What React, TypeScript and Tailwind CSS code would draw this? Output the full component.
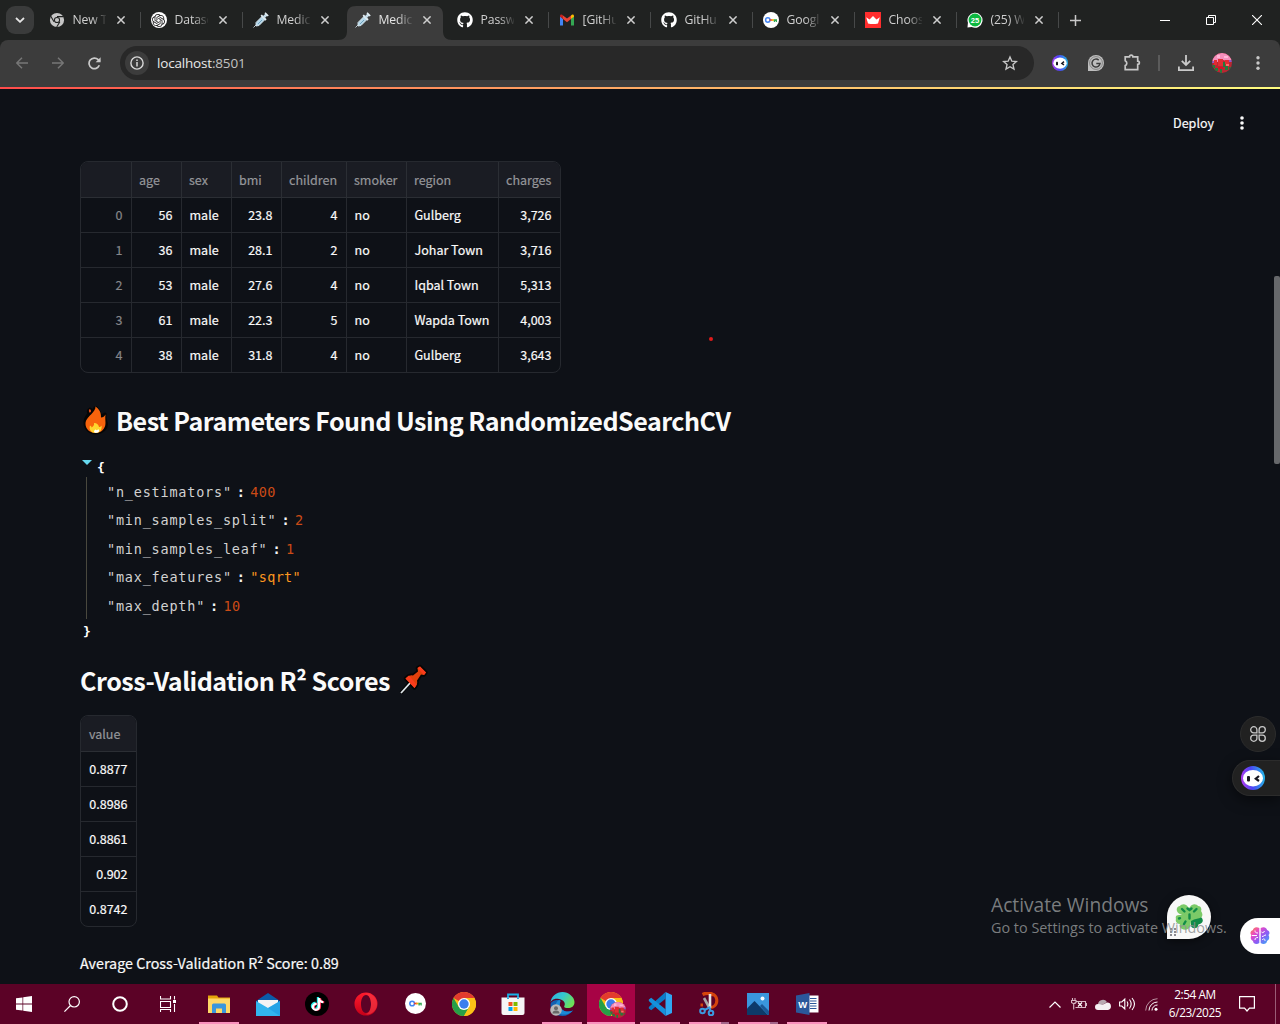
import React from 'react';
import { FaGithub, FaTiktok } from 'react-icons/fa';
import { SiOpenai } from 'react-icons/si';

const sans = "font-['Noto_Sans_CJK_SC',sans-serif]";
const ui = "font-['Open_Sans','Noto_Sans',sans-serif]";

function Syringe() {
  return (
    <svg width="16" height="16" viewBox="0 0 16 16" fill="none">
      <path d="M.5 15.500 4 12" stroke="#b9c4cc" strokeWidth="1" />
      <path d="m3 10.500 6-6 3 3-6 6-3 .5z" fill="#b5d8ea" stroke="#d8e6ee" strokeWidth=".9" />
      <path d="m5 12 4-4" stroke="#6f9fbb" strokeWidth="1" />
      <path d="m8.200 3.200 4.800 4.800" stroke="#e4eef4" strokeWidth="1.800" />
      <path d="m10.500 5.500 3-3" stroke="#c5dbe8" strokeWidth="2.600" />
      <path d="m12 .8 3.200 3.200" stroke="#e4eef4" strokeWidth="1.600" />
    </svg>
  );
}

function GrayChrome() {
  return (
    <svg width="16" height="16" viewBox="0 0 16 16" fill="none">
      <circle cx="8" cy="8" r="5.100" stroke="#c6c6c6" strokeWidth="4" />
      <circle cx="8" cy="8" r="2.100" fill="#c6c6c6" />
      <path d="M8 4.600h6.500M5 9.700 1.800 4.300M10.900 9.700 7.700 15" stroke="#202221" strokeWidth="1.100" />
    </svg>
  );
}

function Chrome({ size = 24 }: { size?: number }) {
  return (
    <svg width={size} height={size} viewBox="0 0 24 24">
      <circle cx="12" cy="12" r="12" fill="#fbc116" />
      <path d="M12 12 1.600 6A12 12 0 0 1 22.400 6z" fill="#e33b2e" />
      <path d="M1.600 6A12 12 0 0 0 12 24l5.200-9L12 12 6.800 15z" fill="#269f48" />
      <path d="M12 6h10.400A12 12 0 0 1 12 24l5.200-9z" fill="#fbc116" />
      <circle cx="12" cy="12" r="6" fill="#fff" />
      <circle cx="12" cy="12" r="4.700" fill="#3b7ded" />
    </svg>
  );
}

function KeyBadge({ size = 16, glyph = 1 }: { size?: number; glyph?: number }) {
  return (
    <svg width={size} height={size} viewBox="0 0 16 16" fill="none">
      <circle cx="8" cy="8" r="8" fill="#fff" />
      <g transform={`translate(${8 - 8 * glyph} ${8 - 8 * glyph}) scale(${glyph})`}>
        <circle cx="4.800" cy="8" r="2.200" stroke="#4285f4" strokeWidth="1.500" />
        <path d="M6.600 8h3" stroke="#ea4335" strokeWidth="1.600" />
        <path d="M8.800 8h2.200" stroke="#fbbc04" strokeWidth="1.600" />
        <path d="M10.800 7.200H14V10h-1.200V9h-.7v1h-1.300z" fill="#34a853" />
      </g>
    </svg>
  );
}

function Gmail() {
  return (
    <svg width="16" height="16" viewBox="0 0 16 16">
      <path d="M1 4v9.500h3V7z" fill="#4285f4" />
      <path d="M12 7v6.500h3V4z" fill="#34a853" />
      <path d="M12 3.400V7l3-2.200V4c0-1.800-1.800-2.200-3-.6" fill="#fbbc04" />
      <path d="M4 3.400 8 6.500l4-3.100V7l-4 3.200L4 7z" fill="#ea4335" />
      <path d="M1 4c0-1.800 1.800-2.200 3-.6V7L1 4.800z" fill="#c5221f" />
    </svg>
  );
}

function Crown() {
  return (
    <svg width="16" height="16" viewBox="0 0 16 16">
      <path d="M0 0h16v16H0z" fill="#ff2d2d" />
      <path d="m1.200 5.300 3.300 2.300L8 4l3.500 3.600 3.300-2.300L13 11.500q-5 1-10 0z" fill="#fff" />
    </svg>
  );
}

function WhatsApp() {
  return (
    <svg width="17" height="16" viewBox="0 0 17 16">
      <path d="M.5 16 1 11A8 8 0 1 1 5 15.400z" fill="#fff" />
      <circle cx="8.500" cy="8" r="6.800" fill="#0cb83f" />
      <text x="8.400" y="10.900" textAnchor="middle" fontSize="8" fontWeight="700" fill="#fff" fontFamily="Liberation Sans, sans-serif">25</text>
    </svg>
  );
}

function Bot({ size }: { size: number }) {
  return (
    <svg width={size} height={size} viewBox="0 0 24 24">
      <defs>
        <linearGradient id="botRing" x1="0" y1="0.7" x2="1" y2="0.6">
          <stop offset="0" stopColor="#b43cf0" />
          <stop offset=".45" stopColor="#4b45f5" />
          <stop offset="1" stopColor="#25b4e8" />
        </linearGradient>
      </defs>
      <circle cx="12" cy="12" r="12" fill="url(#botRing)" />
      <ellipse cx="12" cy="12.200" rx="10" ry="8.300" fill="#fff" />
      <rect x="6" y="10" width="3" height="5.500" rx="1" fill="#171720" />
      <path d="m18 10-3.200 2.600L18 15" fill="none" stroke="#171720" strokeWidth="2.200" />
    </svg>
  );
}

function Flowers({ size = 20 }: { size?: number }) {
  return (
    <svg width={size} height={size} viewBox="0 0 20 20">
      <defs><clipPath id="flowerClip"><circle cx="10" cy="10" r="10" /></clipPath></defs>
      <g clipPath="url(#flowerClip)">
        <path d="M0 0h20v20H0z" fill="#b92732" />
        <path d="M0 0h20v7l-5 1-4-1-5 2-6-1z" fill="#f48fbc" />
        <path d="M5 2h3v3H5zM12 3h4v2h-4z" fill="#ffb6d6" />
        <path d="M0 8h3v2H0zM17 7h3v2h-3z" fill="#9057c9" />
        <path d="M2 7h3v5H2zM6 6h5v7H6zM13 7h4v4h-4z" fill="#e22c31" />
        <path d="M0 12h3v3H0zM3 15h3v3H3zM11 9h2v5h-2zM13 13h3v4h-3zM17 14h3v3h-3zM8 16h2v4H8z" fill="#247a3b" />
        <path d="M14 11h3v2h-3z" fill="#ff6d67" />
        <path d="M6 14h5v2H6z" fill="#d60f26" />
      </g>
    </svg>
  );
}

function Cross() {
  return (
    <svg width="8" height="8" viewBox="0 0 8 8"><path d="m.4.400 7.200 7.200m0-7.200L.4 7.600" stroke="#cfcfcf" strokeWidth="1.500" /></svg>
  );
}

const tabs: { icon: React.ReactNode; title: string }[] = [
  { icon: <GrayChrome />, title: 'New T' },
  { icon: <span className="flex size-4 items-center justify-center rounded-full bg-white"><SiOpenai size={13} color="#222" /></span>, title: 'Datase' },
  { icon: <Syringe />, title: 'Medic' },
  { icon: <Syringe />, title: 'Medic' },
  { icon: <FaGithub size={16} color="#fff" />, title: 'Passw' },
  { icon: <Gmail />, title: '[GitHu' },
  { icon: <FaGithub size={16} color="#fff" />, title: 'GitHu' },
  { icon: <KeyBadge />, title: 'Googl' },
  { icon: <Crown />, title: 'Choos' },
  { icon: <WhatsApp />, title: '(25) W' },
];

function Tab({ icon, title, active, divider }: { icon: React.ReactNode; title: string; active: boolean; divider: boolean }) {
  return (
    <div className="relative flex h-10 w-[102px] shrink-0 items-center">
      {active && (
        <svg className="absolute -left-[7px] top-[6px]" width="116" height="34" viewBox="0 0 116 34">
          <path d="M0 34c6 0 9-3 9-9V9c0-6 3-9 9-9h78c6 0 9 3 9 9v16c0 6 3 9 9 9z" fill="#3c3c3c" />
        </svg>
      )}
      <span className="relative ml-[9.500px] flex w-4 shrink-0 justify-center">{icon}</span>
      <span className={`relative ml-2 w-[33px] shrink-0 whitespace-nowrap text-[12.200px] leading-4 tracking-[-0.1px] [mask-image:linear-gradient(to_right,black_55%,transparent_105%)] ${active ? 'text-[#e3e3e3]' : 'text-[#d0d0d0]'}`}>{title}</span>
      <span className="relative ml-[11.500px]"><Cross /></span>
      {divider && <span className="ml-auto h-4 w-px bg-[#474949]" />}
    </div>
  );
}

function TabStrip() {
  return (
    <div className={`flex h-10 items-center bg-[#202221] ${ui}`}>
      <div className="ml-[6px] mr-[5px] flex size-7 shrink-0 items-center justify-center rounded-[9px] bg-[#3a3b3b]">
        <svg width="10" height="6" viewBox="0 0 10 6" fill="none"><path d="m1 1 4 3.800L9 1" stroke="#e6e6e6" strokeWidth="1.800" /></svg>
      </div>
      {tabs.map((t, i) => <Tab key={i} icon={t.icon} title={t.title} active={i === 3} divider={i !== 2 && i !== 3} />)}
      <svg className="ml-[10.500px] shrink-0" width="11" height="11" viewBox="0 0 11 11"><path d="M5.500 0v11M0 5.500h11" stroke="#c9c9c9" strokeWidth="1.500" /></svg>
      <div className="ml-auto flex">
        <div className="flex w-[46px] justify-center"><svg width="10" height="10" viewBox="0 0 10 10"><path d="M0 5.500h10" stroke="#fff" /></svg></div>
        <div className="flex w-[46px] justify-center"><svg width="10" height="10" viewBox="0 0 10 10" fill="none"><path d="M.5 2.500h7v7h-7zM2.500 2V.500h7v7H8" stroke="#fff" /></svg></div>
        <div className="flex w-[46px] justify-center"><svg width="10" height="10" viewBox="0 0 10 10"><path d="m0 0 10 10M10 0 0 10" stroke="#fff" strokeWidth="1.100" /></svg></div>
      </div>
    </div>
  );
}

function Slot({ children }: { children: React.ReactNode }) {
  return <div className="flex w-9 shrink-0 items-center justify-center">{children}</div>;
}

function Toolbar() {
  return (
    <div className="bg-[#202221]">
      <div className="flex h-[47px] items-center rounded-t-lg bg-[#3c3c3c] px-1 pb-[1px]">
        <Slot><svg width="12" height="12" viewBox="0 0 12 12" fill="none"><path d="M12 6H1M6 .7.700 6 6 11.300" stroke="#777" strokeWidth="1.500" /></svg></Slot>
        <Slot><svg width="12" height="12" viewBox="0 0 12 12" fill="none"><path d="M0 6h11M6 .7 11.300 6 6 11.300" stroke="#777" strokeWidth="1.500" /></svg></Slot>
        <Slot><svg width="13" height="13" viewBox="0 0 13 13" fill="none"><path d="M11.300 8.300A5.300 5.300 0 1 1 10.200 2.700L11.800 4.400" stroke="#cacaca" strokeWidth="1.700" /><path d="M12.600.300v5H7.600z" fill="#cacaca" /></svg></Slot>
        <div className="ml-2 flex h-[34px] w-[914px] items-center rounded-full bg-[#282828] pl-[5px] pr-4">
          <span className="flex size-6 items-center justify-center rounded-full bg-[#3c3c3c]">
            <svg width="14" height="14" viewBox="0 0 14 14" fill="none"><circle cx="7" cy="7" r="6.100" stroke="#d8d8d8" strokeWidth="1.400" /><path d="M7 6v4.400M7 3.500V5" stroke="#d8d8d8" strokeWidth="1.500" /></svg>
          </span>
          <span className={`ml-[8px] text-[13.500px] leading-5 tracking-[-0.18px] text-[#e8e8e8] ${ui}`}>localhost<span className="text-[#c2c2c2]">:8501</span></span>
          <svg className="ml-auto" width="16" height="16" viewBox="0 0 14 14" fill="none"><path d="m7 1.700 1.600 3.700 4 .3-3 2.700.9 4L7 10.300l-3.500 2.100.9-4-3-2.700 4-.3z" stroke="#c8c8c8" strokeWidth="1.200" /></svg>
        </div>
        <div className="ml-2 flex items-center">
          <Slot><Bot size={16} /></Slot>
          <Slot>
            <svg width="16" height="16" viewBox="0 0 16 16" fill="none"><path d="M0 16V8a8 8 0 1 1 8 8z" fill="#bebebe" /><circle cx="8" cy="8" r="6.400" stroke="#777" strokeWidth=".8" /><path d="M10.700 5.100A4 4 0 1 0 12 8.500H8.300" stroke="#3c3c3c" strokeWidth="1.500" /></svg>
          </Slot>
          <Slot>
            <svg className="ml-px -mt-px" width="17" height="17" viewBox="0 0 17 17" fill="none"><path d="M1.200 2.800h4.300a1.700 1.700 0 0 1 3.400 0h4.800v4.300a1.600 1.600 0 0 1 0 3.300v5.200H1.200v-4a2.600 2.600 0 0 0 0-4.800z" stroke="#c6c6c6" strokeWidth="1.700" /></svg>
          </Slot>
          <div className="flex w-[18px] justify-center"><span className="h-4 w-[2px] bg-[#5b5b5b]" /></div>
          <Slot><svg width="16" height="16" viewBox="0 0 16 16" fill="none"><path d="M8 0v9.500M3.800 5.800 8 10l4.200-4.200M.9 11.500v3.600h14.200v-3.600" stroke="#cacaca" strokeWidth="1.800" /></svg></Slot>
          <Slot><Flowers /></Slot>
          <Slot><svg width="4" height="14" viewBox="0 0 4 14" fill="#c8c8c8"><circle cx="2" cy="1.800" r="1.700" /><circle cx="2" cy="7" r="1.700" /><circle cx="2" cy="12.200" r="1.700" /></svg></Slot>
        </div>
      </div>
    </div>
  );
}

const columns = [
  { name: '', width: 'w-[51px]', right: true },
  { name: 'age', width: 'w-[50px]', right: true },
  { name: 'sex', width: 'w-[50px]', right: false },
  { name: 'bmi', width: 'w-[50px]', right: true },
  { name: 'children', width: 'w-[65px]', right: true },
  { name: 'smoker', width: 'w-[60px]', right: false },
  { name: 'region', width: 'w-[92px]', right: false },
  { name: 'charges', width: 'w-[61px]', right: true },
];

const people = [
  ['0', '56', 'male', '23.8', '4', 'no', 'Gulberg', '3,726'],
  ['1', '36', 'male', '28.1', '2', 'no', 'Johar Town', '3,716'],
  ['2', '53', 'male', '27.6', '4', 'no', 'Iqbal Town', '5,313'],
  ['3', '61', 'male', '22.3', '5', 'no', 'Wapda Town', '4,003'],
  ['4', '38', 'male', '31.8', '4', 'no', 'Gulberg', '3,643'],
];

function PeopleTable() {
  return (
    <div className="w-[481px] overflow-hidden rounded-lg border border-[#26292f] text-[12.530px] leading-[34px] text-[#fafafa] [-webkit-text-stroke:0.2px]">
      <div className="flex h-[36px] border-b border-[#2b2e34] bg-[#1a1c23] leading-[36px] text-[#95969a]">
        {columns.map((c, i) => (
          <div key={i} className={`shrink-0 whitespace-nowrap pl-[7px] ${c.width} ${i < 7 ? 'border-r border-[#2b2e34]' : ''}`}>{c.name}</div>
        ))}
      </div>
      {people.map((row, r) => (
        <div key={r} className={`flex ${r < 4 ? 'h-[35px] border-b border-[#26292f]' : 'h-[34px]'}`}>
          {row.map((v, i) => (
            <div key={i} className={`shrink-0 whitespace-nowrap pl-[7.500px] pr-[8.500px] ${columns[i].width} ${columns[i].right ? 'text-right' : ''} ${i === 0 ? 'text-[#85868a]' : ''} ${i < 7 ? 'border-r border-[#26292f]' : ''}`}>{v}</div>
          ))}
        </div>
      ))}
    </div>
  );
}

function ScoreTable() {
  const scores = ['0.8877', '0.8986', '0.8861', '0.902', '0.8742'];
  return (
    <div className="w-[57px] overflow-hidden rounded-lg border border-[#26292f] text-[12.530px] leading-[34px] text-[#fafafa] [-webkit-text-stroke:0.2px]">
      <div className="h-[36px] border-b border-[#2b2e34] bg-[#1a1c23] pl-2 leading-[36px] text-[#95969a]">value</div>
      {scores.map((s, i) => (
        <div key={s} className={`pr-[8.500px] text-right ${i < 4 ? 'h-[35px] border-b border-[#26292f]' : 'h-[34px]'}`}>{s}</div>
      ))}
    </div>
  );
}

const params = [
  { key: 'n_estimators', value: '400', text: false },
  { key: 'min_samples_split', value: '2', text: false },
  { key: 'min_samples_leaf', value: '1', text: false },
  { key: 'max_features', value: '"sqrt"', text: true },
  { key: 'max_depth', value: '10', text: false },
];

function JsonView() {
  return (
    <div className="font-['DejaVu_Sans_Mono',monospace] text-[13.500px] leading-[28.500px] tracking-[0.790px] text-[#e8e8e8]">
      <div className="flex h-[24px] items-start">
        <svg className="ml-[2px] mt-[7px]" width="10" height="5" viewBox="0 0 10 5"><path d="M0 0h10L5 5z" fill="#66d9ef" /></svg>
        <span className="ml-[5px] mt-[5px] text-[13px] font-bold leading-5 text-white">{'{'}</span>
      </div>
      <div className="ml-[6px] h-[142px] border-l border-[#49483e] pl-5 pt-[0.500px]">
        {params.map((p) => (
          <div key={p.key} className="flex whitespace-nowrap text-[#d2d2d2]">
            <span>&quot;{p.key}&quot;</span>
            <span className="ml-[5px] w-[9px] font-bold text-[#f5f5f5]">:</span>
            <span className={`ml-[4.500px] tracking-[0.300px] ${p.text ? 'text-[#fd971f]' : 'text-[#cb4b16]'}`}>{p.value}</span>
          </div>
        ))}
      </div>
      <div className="ml-[3px] h-6 text-[13px] font-bold leading-[25px] text-white">{'}'}</div>
    </div>
  );
}

function Fire() {
  return (
    <svg width="28" height="32" viewBox="0 0 28 32">
      <path d="M14.500 3c1.500 2 4.500 4 5 9.500l4.500-2.500c0 3-.5 5 1 8 2 6-4 11-10.500 11S4 24 4 18.500c0-4 2-6.500 4-9C7 8 7 6 9 5c1 1 2 1.500 2.500 2 1.500-1 2-2.500 3-4" fill="#050505" stroke="#050505" strokeWidth="3" strokeLinejoin="round" />
      <path d="M14.500 2.500c.3 3-2 5-4.500 8C7 13.500 4.500 16 4.500 20c0 5 4.500 9 10 9S24.500 25 24.500 19c0-3-.5-5 0-8.500-1 2-2.500 3-4.500 3 .3-5.500-2-8.500-5.500-11z" fill="#f7630c" />
      <path d="M8.800 5c-1.500 1-1 3 0 3.800C10.500 8 10.500 6 8.800 5z" fill="#e74a16" />
      <path d="M13 19c.5 2-1 3.500-2.500 4.500 0-1-.5-1.500-1.500-2-1.500 4 1.500 7.500 5.500 7.500s7-3 6-7.500c-.7 1-1.500 1.500-2.500 1.500-.3-2-2-4-5-4z" fill="#ffd52e" />
      <path d="M14.500 25.500c-2 1-2 3.300.5 3.300s4-1.600 2.500-3.500l-1.700 1z" fill="#fff" />
    </svg>
  );
}

function Pin() {
  return (
    <svg width="31" height="32" viewBox="0 0 31 32">
      <g fill="#050505" stroke="#050505" strokeWidth="3.500" strokeLinejoin="round">
        <path d="m3 29 9-10.500" />
        <path d="M7.500 14.500q3.500-4 7.500-3l5-4-.5-3.500 2.500-1.500 6 6-2 2.500-3-.5-4 6q1 4-2.500 7.500z" />
      </g>
      <path d="m3 29 10-11" stroke="#dfe6ea" strokeWidth="1.800" />
      <path d="M7.500 14.500q3.500-4 7.500-3l5-4-.5-3.500 2.500-1.500 6 6-2 2.500-3-.5-4 6q1 4-2.500 7.500z" fill="#e0400c" />
      <path d="m7.500 14.500 9 9.500 2-3.500-7.500-9zM19.500 4 22 2.500l6 6-2 2.500z" fill="#fa3c1c" />
    </svg>
  );
}

function FloatingWidgets() {
  return (
    <>
      <div className="absolute left-[709px] top-[250px] size-1 rounded-full bg-[#e01b1b]" />
      <div className="absolute right-0 top-[189px] h-[188px] w-[6px] rounded-[2px] bg-[#66686b]" />
      <div className="absolute right-[4px] top-[629px] flex size-9 items-center justify-center rounded-full border border-[#2c2c2c] bg-[#212121]">
        <svg width="16" height="16" viewBox="0 0 16 16" fill="none" stroke="#c9c9c9" strokeWidth="1.300">
          <path d="M6.900 6.900H3.800A3.100 3.100 0 1 1 6.900 3.800zM9.100 6.900V3.800a3.100 3.100 0 1 1 3.100 3.100zM6.900 9.100v3.100a3.100 3.100 0 1 1-3.100-3.100zM9.100 9.100h3.100a3.100 3.100 0 1 1-3.100 3.100z" />
        </svg>
      </div>
      <div className="absolute right-0 top-[673px] flex h-9 w-12 items-center rounded-l-full border border-r-0 border-[#2c2c2c] bg-[#212121] pl-[8px] shadow-[0_4px_14px_rgba(0,0,0,0.5)]">
        <Bot size={24} />
      </div>
      <div className="absolute left-[1167px] top-[808px] flex size-[44px] items-center justify-center rounded-full rounded-bl-[2px] bg-[#f8f8f8] shadow-[0_2px_8px_rgba(0,0,0,0.5)]">
        <svg className="-ml-[1px]" width="28" height="26" viewBox="0 0 28 26">
          <path d="m17 14 9-1c3 3 2 6-1 7-2 0-2 1-2 2-1 3-6 3-7 0v-6z" fill="#118b48" />
          <path d="M12 11C8 12 3 10 2 7s1-5 3-5c1-2 6-3 8 1l1 1 1-1c2-4 7-3 8-1 3 0 4 3 3 5 2 3 2 6-1 7l-6 1.500L16 17c0 3-1 5-2 7-1 2-5 2-7 1s-3-3-2-5c-3 0-5-3-4-5-1-3 1-4 3-4z" fill="#7cca68" />
          <path d="m7 5 2.500 2.500M21.500 5 19 7.500M4 14.500l1-.3M9 20l1.500-2.500M14.500 10.500v4M12.500 4.500l2 1.500 2-1.500" stroke="#118b48" strokeWidth="2.400" strokeLinecap="round" fill="none" />
        </svg>
        <svg className="absolute bottom-[3px] left-[3px]" width="6" height="8" viewBox="0 0 6 8" fill="#8b8b91"><path d="M0 0h2v2H0zM4 0h2v2H4zM0 3h2v2H0zM4 3h2v2H4zM0 6h2v2H0zM4 6h2v2H4z" /></svg>
      </div>
      <div className="absolute right-0 top-[831px] flex h-9 w-10 items-center rounded-l-full bg-white pl-[10px]">
        <svg width="20" height="20" viewBox="0 0 20 20" fill="none">
          <defs>
            <linearGradient id="brainFill" x1="0" y1="0" x2="1" y2="1"><stop offset="0" stopColor="#ff8b3d" /><stop offset=".3" stopColor="#e848c8" /><stop offset=".6" stopColor="#8a5cf6" /><stop offset="1" stopColor="#2fb4f5" /></linearGradient>
          </defs>
          <path d="M9.300 2C6 0 3 2 3 4 0 5 0 8 1.500 9 0 12 1 14 3 15c0 3 4 4 6.300 2zM10.700 2C14 0 17 2 17 4c3 1 3 4 1.500 5 1.500 3 .5 5-1.500 6 0 3-4 4-6.300 2z" fill="url(#brainFill)" />
          <path d="M2 9.500h5M5 4.500c0 2 1 2.500 3 2.500M5 14c0-2 1-2.500 3-2.500M11.500 6c1 1 2 1 3-1M12 10.500c2 0 2-1.500 4-1.500M12 14c2-2 3-1 3 1" stroke="#fff" strokeWidth="1" />
        </svg>
      </div>
      <div className={`pointer-events-none absolute left-[991px] top-[805px] whitespace-nowrap text-[#8f9193]/85 ${ui}`}>
        <div className="text-[19.200px] leading-[26px]">Activate Windows</div>
        <div className="text-[14.400px] leading-[20px]">Go to Settings to activate Windows.</div>
      </div>
    </>
  );
}

function Page() {
  return (
    <div className={`relative h-[897px] overflow-hidden bg-[#0e1117] ${sans}`}>
      <div className="h-[2px] bg-linear-to-r from-[#ff4b4b] to-[#fffd80]" />
      <div className="flex h-[72px] items-center justify-end pr-[36px] text-[#fafafa]">
        <span className="-mt-[5px] text-[12.530px] leading-5 [-webkit-text-stroke:0.2px]">Deploy</span>
        <svg className="-mt-[4px] ml-[26px]" width="4" height="14" viewBox="0 0 4 14" fill="#fafafa"><circle cx="2" cy="2" r="1.800" /><circle cx="2" cy="7" r="1.800" /><circle cx="2" cy="12" r="1.800" /></svg>
      </div>
      <main className="flex flex-col items-start pl-20">
        <PeopleTable />
        <h2 className="mt-[27px] flex h-10 items-center whitespace-nowrap text-[25.070px] font-semibold leading-10 tracking-[-0.490px] text-[#fafafa]">
          <span className="ml-px"><Fire /></span><span className="ml-[7px]">Best Parameters Found Using RandomizedSearchCV</span>
        </h2>
        <div className="mt-[13px]"><JsonView /></div>
        <h2 className="mt-[17px] flex h-10 items-center whitespace-nowrap text-[25.070px] font-semibold leading-10 tracking-[-0.470px] text-[#fafafa]">
          <span className="mr-[8px]">Cross-Validation R² Scores</span><Pin />
        </h2>
        <div className="mt-[15px]"><ScoreTable /></div>
        <p className="mt-[24px] text-[14.320px] leading-6 text-[#fafafa] [-webkit-text-stroke:0.2px]">Average Cross-Validation R² Score: 0.89</p>
      </main>
      <FloatingWidgets />
    </div>
  );
}

function Folder() {
  return (
    <svg width="22" height="20" viewBox="0 0 22 20"><path d="M0 1.500h9l1.500 2H22V19H0z" fill="#e5a50a" /><path d="M0 4.500h22V19H0z" fill="#ffd767" /><path d="M4 11q0-1.500 1.500-1.500h11Q18 9.500 18 11v8h-4v-4.500H8V19H4z" fill="#3a96dd" /></svg>
  );
}

function Mail() {
  return (
    <svg width="24" height="23" viewBox="0 0 24 23"><path d="M0 8 12 0l12 8v7H0z" fill="#0b5ba8" /><path d="M2 7h20v5l-10 6L2 12z" fill="#f4f4f4" /><path d="m0 8 12 7 12-7v15H0z" fill="#32b5ee" /><path d="m12 15 12-7v15z" fill="#1a94e0" opacity=".55" /></svg>
  );
}

function Store() {
  return (
    <svg width="24" height="24" viewBox="0 0 24 24"><path d="M7 6V2.500h10V6" fill="none" stroke="#18b1e8" strokeWidth="1.800" /><path d="M.5 5.500h23V21q0 2-2 2h-19q-2 0-2-2z" fill="#f5f5f5" /><path d="M7 5.500V7M17 5.500V7" stroke="#18a0d8" strokeWidth="1.800" /><path d="M7.500 10h4v4h-4z" fill="#f25022" /><path d="M12.500 10h4v4h-4z" fill="#7fba00" /><path d="M7.500 15h4v4h-4z" fill="#00a4ef" /><path d="M12.500 15h4v4h-4z" fill="#ffb900" /></svg>
  );
}

function Edge() {
  return (
    <svg width="25" height="24" viewBox="0 0 25 24">
      <defs>
        <linearGradient id="edgeTop" x1="0" y1="0" x2="1" y2=".5"><stop offset="0" stopColor="#2faee0" /><stop offset=".5" stopColor="#35c8d0" /><stop offset="1" stopColor="#6de058" /></linearGradient>
      </defs>
      <path d="M.5 11C1 4 6.500 0 12.500 0S24.500 5 24.500 10s-4 6.500-8 6c-2-.3-3-1-2-2.500S14.500 8 9 7 1 9 .5 11z" fill="url(#edgeTop)" />
      <path d="M.5 12C0 20 6 24 12.500 24c4 0 8-2 10.500-5.500-6 2.500-12 0-13-4S12 8.500 9 8s-8 1-8.500 4z" fill="#1260b0" />
      <path d="M9 8c-5 3-5 10 0 13.500 3 2 10 1.500 14-3-6 2.500-12 0-13-4S12 8.500 9 8z" fill="#1b8ad6" />
      <circle cx="6" cy="18" r="5.800" fill="#b8b8b8" /><circle cx="6" cy="16.200" r="2" fill="#686868" /><path d="M2.500 21.500q0-3 3.500-3t3.500 3z" fill="#686868" />
    </svg>
  );
}

function VsCode() {
  return (
    <svg width="24" height="24" viewBox="0 0 24 24"><path d="M17.500 0 24 3v18l-6.500 3z" fill="#2fa8f2" /><path d="m17.500 0 .3 6.500L3.200 18.200.8 16.500V15z" fill="#0a7cc8" /><path d="m17.500 24 .3-6.500L3.200 5.800.8 7.500V9z" fill="#1591dc" /></svg>
  );
}

function Snip() {
  return (
    <svg width="20" height="24" viewBox="0 0 20 24" fill="none">
      <path d="M3.500 2.500Q10-.5 14.500 3" stroke="#d6450d" strokeWidth="3.500" />
      <path d="M14.500 2.500c4 2.500 4.500 8 1 11.500-1 1-3 1.500-4.500 1.500M4 13H1.500" stroke="#d6450d" strokeWidth="3" />
      <path d="m5 6 5.500 10" stroke="#a8a8a8" strokeWidth="2.600" />
      <path d="M11 2v14" stroke="#e7e7e7" strokeWidth="2.600" />
      <circle cx="3.500" cy="19" r="2.300" stroke="#3c9ae0" strokeWidth="2" />
      <circle cx="12" cy="21" r="2.300" stroke="#3c9ae0" strokeWidth="2" />
      <path d="m5.500 18 5-2.500 1 3.500" stroke="#3c9ae0" strokeWidth="2" />
    </svg>
  );
}

function Photos() {
  return (
    <svg width="22" height="22" viewBox="0 0 22 22"><path d="M0 0h22v22H0z" fill="#3a96dd" /><path d="M0 15.500 7.500 8 21 22H0z" fill="#0d3a69" /><path d="m13 13 2-2 7 7v4h-1z" fill="#1a5795" /><circle cx="15.500" cy="5.500" r="2" fill="#f5fbff" /></svg>
  );
}

function Word() {
  return (
    <svg width="23" height="22" viewBox="0 0 23 22"><path d="M11 2.500h11.500v17H11z" fill="#fff" /><path d="M14 5.500h6.500M14 8h6.500M14 10.500h6.500M14 13h6.500M14 15.500h6.500" stroke="#2b579a" /><path d="M0 2.500 13.500 0v22L0 19.500z" fill="#2b579a" /><text x="6.700" y="14.500" textAnchor="middle" fontSize="9.500" fontWeight="700" fill="#fff" fontFamily="Liberation Sans, sans-serif">W</text></svg>
  );
}

function Opera() {
  return (
    <svg width="24" height="24" viewBox="0 0 24 24"><defs><linearGradient id="operaRed" x1="0" y1="0" x2="0" y2="1"><stop offset="0" stopColor="#ff1b2d" /><stop offset="1" stopColor="#c40018" /></linearGradient></defs><path fillRule="evenodd" d="M12 .5a11.500 11.500 0 1 0 0 23 11.500 11.500 0 0 0 0-23M12 3c3 0 5 4 5 9s-2 9-5 9-5-4-5-9 2-9 5-9" fill="url(#operaRed)" /><path d="M11 2c5-2 12 3 12 10s-7 12-12 10c4 0 6-5 6-10S15 2 11 2" fill="#f23c48" opacity=".6" /></svg>
  );
}

function TikTok() {
  return (
    <span className="relative flex size-6 items-center justify-center rounded-full bg-black">
      <FaTiktok className="absolute left-[5px] top-[5px]" size={13} color="#25f4ee" />
      <FaTiktok className="absolute left-[7px] top-[6px]" size={13} color="#fe2c55" />
      <FaTiktok className="absolute left-[6px] top-[5.500px]" size={13} color="#fff" />
    </span>
  );
}

const apps: { icon: React.ReactNode; state?: 'open' | 'active' | 'multi' }[] = [
  { icon: <Folder />, state: 'open' },
  { icon: <Mail /> },
  { icon: <TikTok /> },
  { icon: <Opera /> },
  { icon: <span className="-mt-[2px]"><KeyBadge size={21} glyph={0.8} /></span> },
  { icon: <Chrome /> },
  { icon: <Store /> },
  { icon: <Edge />, state: 'open' },
  { icon: <span className="relative"><Chrome /><span className="absolute -right-[3px] top-[10px]"><Flowers size={16} /></span></span>, state: 'active' },
  { icon: <VsCode />, state: 'open' },
  { icon: <Snip />, state: 'multi' },
  { icon: <Photos />, state: 'multi' },
  { icon: <Word />, state: 'open' },
];

function Taskbar() {
  return (
    <div className="flex h-10 bg-[#5b0226] text-white">
      <div className="flex w-12 items-center justify-center"><svg width="16" height="16" viewBox="0 0 16 16" fill="#fff"><path d="M0 2.300 6.500 1.400v6.200H0zM7.200 1.300 16 0v7.600H7.200zM0 8.400h6.500v6.200L0 13.700zM7.200 8.400H16V16l-8.800-1.300z" /></svg></div>
      <div className="flex w-12 items-center justify-center"><svg width="16" height="16" viewBox="0 0 16 16" fill="none" stroke="#fff" strokeWidth="1.200"><circle cx="10.200" cy="5.800" r="5.200" /><path d="M6.500 9.500.400 15.600" /></svg></div>
      <div className="flex w-12 items-center justify-center"><svg width="16" height="16" viewBox="0 0 16 16" fill="none"><circle cx="8" cy="8" r="6.800" stroke="#fff" strokeWidth="2" /></svg></div>
      <div className="flex w-12 items-center justify-center"><svg width="16" height="16" viewBox="0 0 16 16" fill="none" stroke="#fff"><path d="M.5 0v3h10V0M.5 5.500h10v6H.500zM.5 16v-2.500h10V16M14.500 0v3.500M14.500 8v8" strokeWidth="1.100" /><path d="M13 4h3v3h-3z" fill="#fff" stroke="none" /></svg></div>
      <div className="flex pl-[2.500px]">
        {apps.map((a, i) => (
          <div key={i} className="flex w-[49px] shrink-0 flex-col items-center">
            <div className={`flex h-[38px] w-12 items-center justify-center pt-[2px] ${a.state === 'active' ? 'bg-[#a70345]' : ''}`}>{a.icon}</div>
            {a.state && <div className={`flex h-[2px] justify-end bg-[#f991bd] ${a.state === 'active' ? 'w-12' : 'w-10'}`}>{a.state === 'multi' && <span className="w-[8px] bg-[#a3668a]" />}</div>}
          </div>
        ))}
      </div>
      <div className="ml-auto flex items-center">
        <div className="flex w-6 justify-center"><svg width="12" height="7" viewBox="0 0 12 7" fill="none"><path d="m.5 6.500 5.500-5.500 5.500 5.500" stroke="#fff" strokeWidth="1.200" /></svg></div>
        <div className="flex w-6 justify-center"><svg width="16" height="12" viewBox="0 0 16 12" fill="none"><path d="M1.500 0v2M4 0v2M.5 2.500h4.500v2q-2 2-4.500 0zM2.700 6v5.500M5 3.500h9.500v6H4.500M15.500 5v3" stroke="#d9b9c5" strokeWidth="1.100" /><path d="m7 4.500 4 4m0-4-4 4" stroke="#fff" strokeWidth="1.200" /></svg></div>
        <div className="flex w-6 justify-center"><svg width="16" height="11" viewBox="0 0 16 11"><path d="M3 5a5 5 0 0 1 9-2l-8 5z" fill="#b9a9b1" /><path d="M3 11a3 3 0 0 1 0-6q2 0 4 1l5-2.500a3.800 3.800 0 0 1 1 7.500z" fill="#f5f0f2" /></svg></div>
        <div className="flex w-6 justify-center"><svg width="17" height="14" viewBox="0 0 17 14" fill="none" stroke="#fff" strokeWidth="1.100"><path d="M.6 5v4h2.200l3 3V2l-3 3zM8 4.500q1.700 2.500 0 5M10.500 2.500q3.300 4.500 0 9M13 1q5 6 0 12" /></svg></div>
        <div className="flex w-[25px] justify-center"><svg width="13" height="13" viewBox="0 0 13 13" fill="none" stroke="#fff"><path d="M.7 12.500A12 12 0 0 1 12.500.700" stroke="#b992a2" /><path d="M4 12.500A8.500 8.500 0 0 1 12.500 4M7 12.500A5.500 5.500 0 0 1 12.500 7" /><circle cx="11" cy="11.200" r="1.500" fill="#fff" stroke="none" /></svg></div>
        <div className={`w-[62px] whitespace-nowrap pb-[2px] text-center text-[11.800px] leading-[18px] tracking-[-0.400px] ${ui}`}><div>2:54 AM</div><div>6/23/2025</div></div>
        <div className="flex w-[42px] justify-center"><svg width="16" height="16" viewBox="0 0 16 16" fill="none"><path d="M.6.600h14.800v11.500H10.500L8 15l-2.500-2.900H.600z" stroke="#fff" strokeWidth="1.200" /></svg></div>
        <span className="ml-[7px] mr-[4px] h-10 w-px bg-[#9a5c76]" />
      </div>
    </div>
  );
}

export default function App() {
  return (
    <div className="flex h-[1024px] w-[1280px] flex-col overflow-hidden bg-[#0e1117]">
      <TabStrip />
      <Toolbar />
      <Page />
      <Taskbar />
    </div>
  );
}
